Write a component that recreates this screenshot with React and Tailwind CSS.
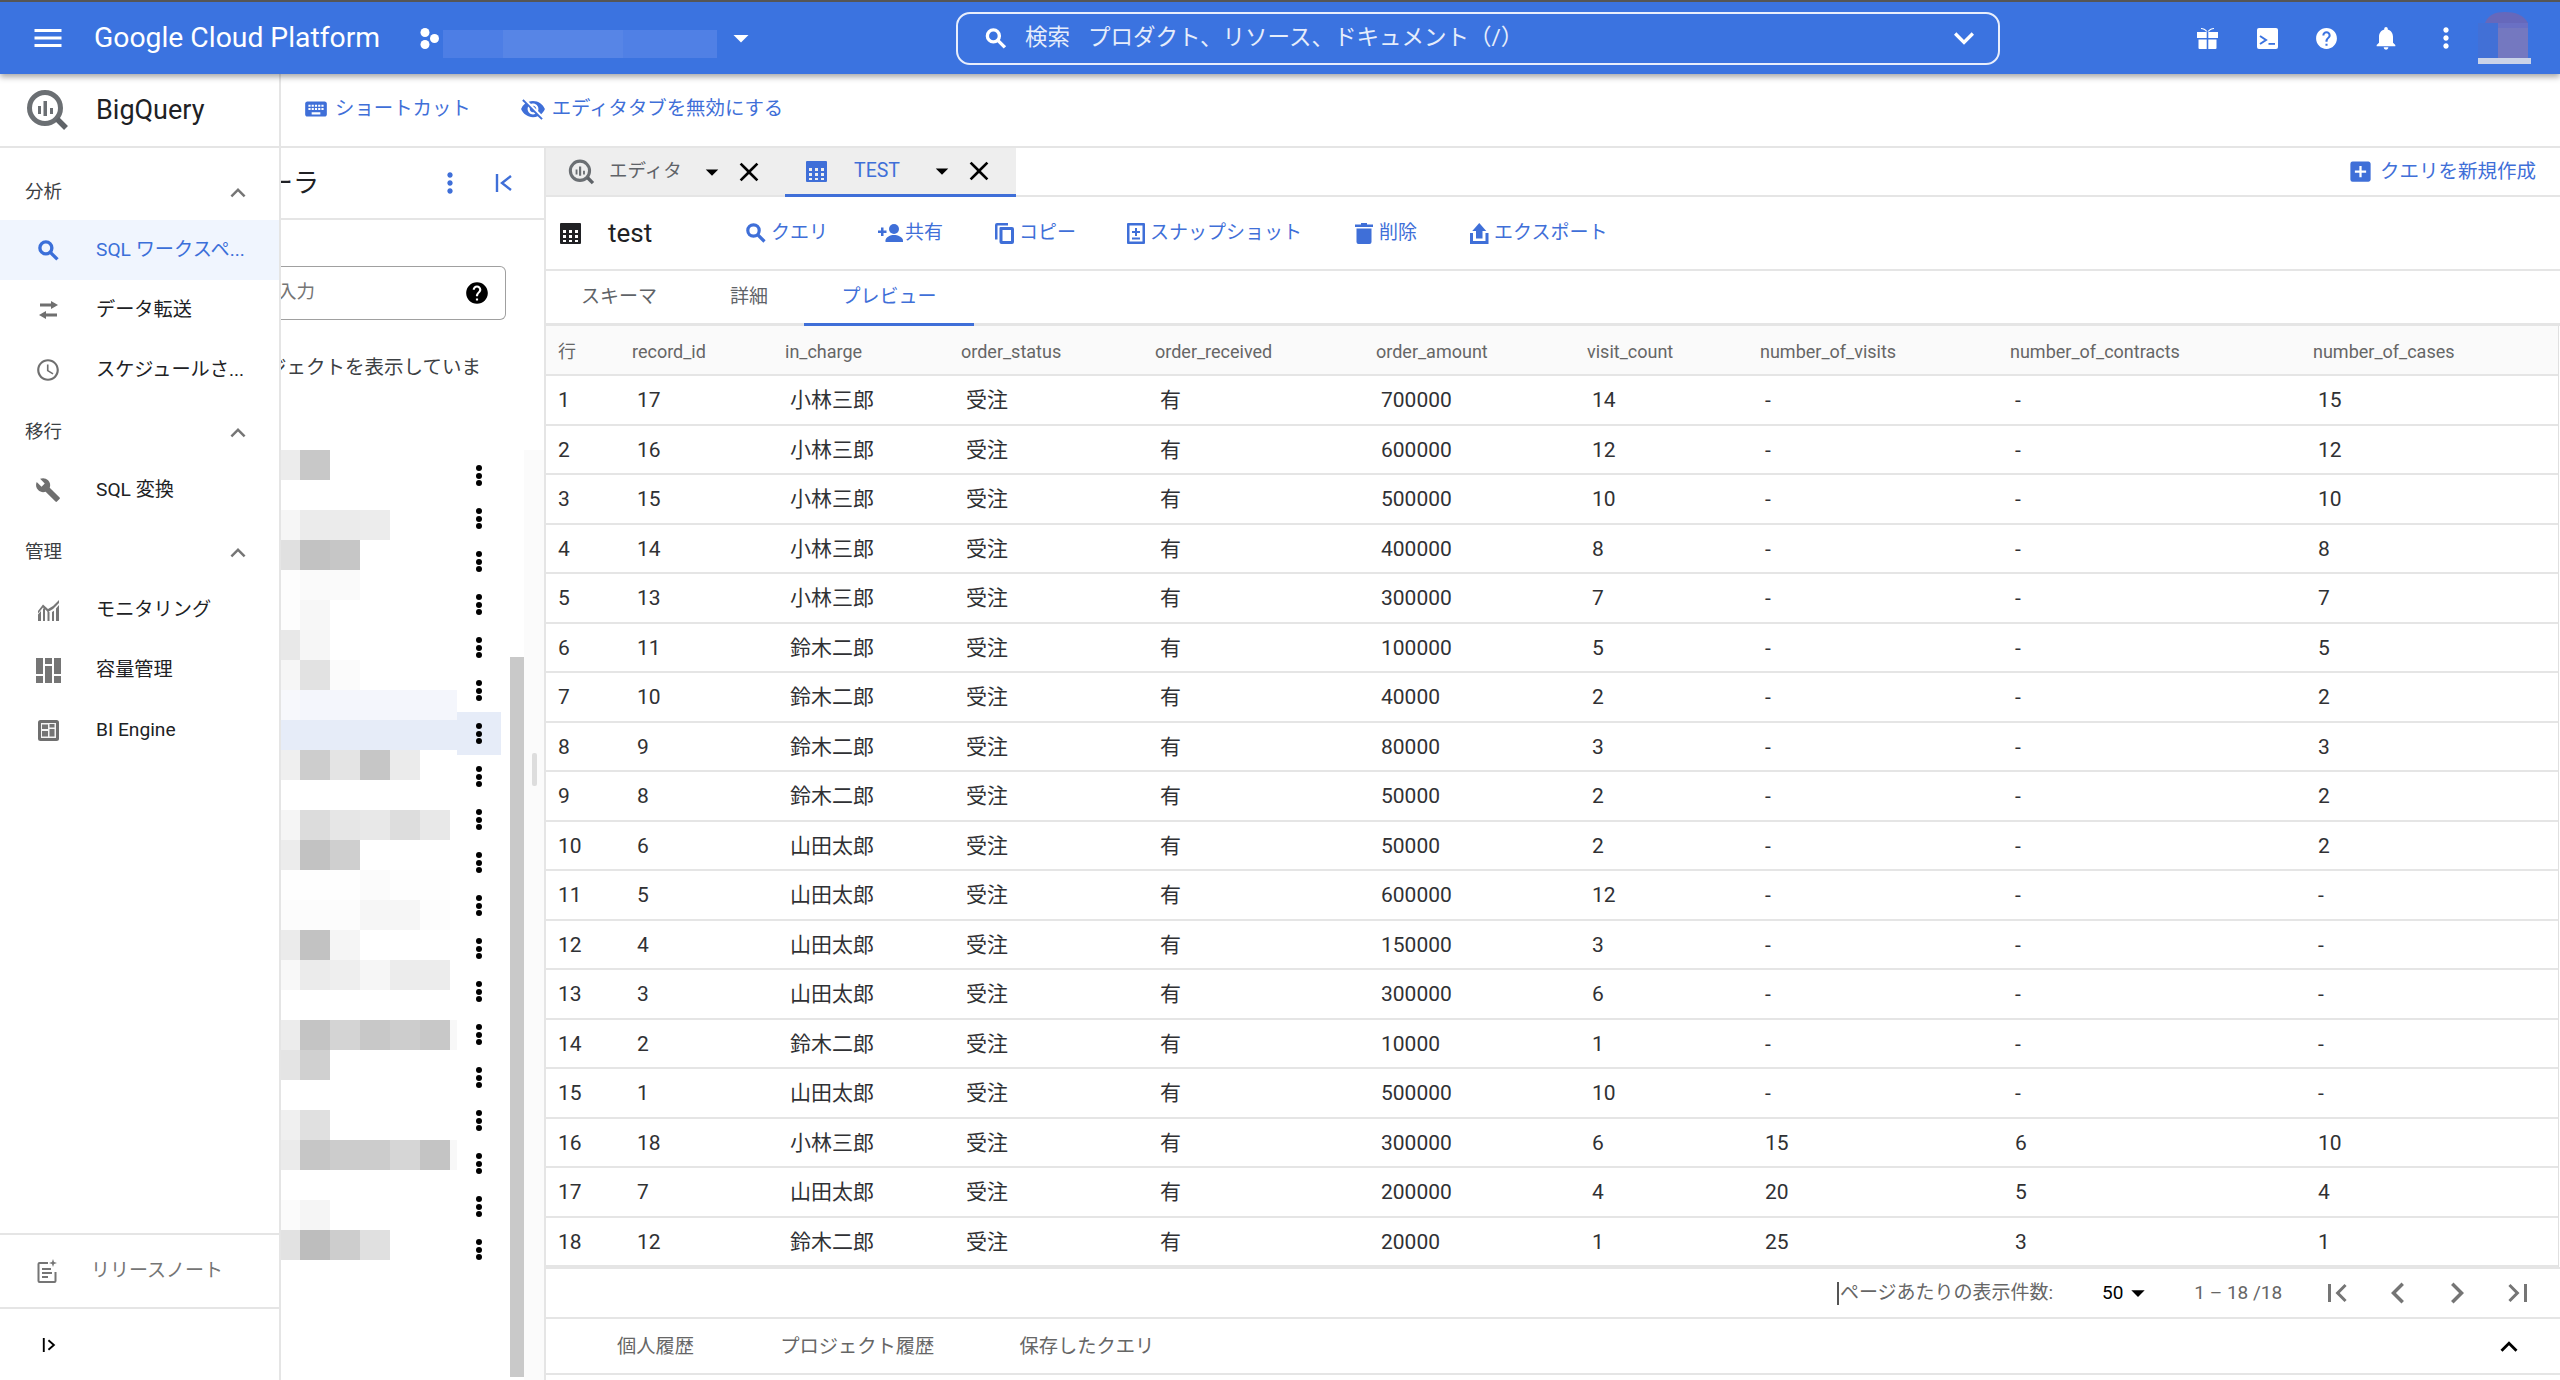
import React from "react";
import {
  MdMenu, MdArrowDropDown, MdKeyboardArrowDown, MdKeyboardArrowUp, MdHelp, MdNotifications, MdMoreVert,
  MdAccessTime, MdBuild, MdKeyboard, MdVisibilityOff, MdClose, MdAddBox,
  MdChevronLeft, MdChevronRight, MdFirstPage, MdLastPage,
} from "react-icons/md";

const Table = ({ className }) => (
  <svg viewBox="0 0 21 21" className={className} fill="currentColor">
    <path fillRule="evenodd" d="M1 0h19a1 1 0 0 1 1 1v19a1 1 0 0 1-1 1H1a1 1 0 0 1-1-1V1a1 1 0 0 1 1-1zM3 7v3h3V7zm6 0v3h3V7zm6 0v3h3V7zM3 12v3h3v-3zm6 0v3h3v-3zm6 0v3h3v-3zM3 17v2h3v-2zm6 0v2h3v-2zm6 0v2h3v-2z" />
  </svg>
);

const BqLogo = ({ className }) => (
  <svg viewBox="0 0 43 42" className={className}>
    <circle cx="19" cy="19" r="15.5" fill="none" stroke="#6b6f73" strokeWidth="5" />
    <path d="M31 30l9 9" stroke="#5f6368" strokeWidth="5.5" />
    <path d="M12 17h3v8h-3zM17.5 12h3.5v15h-3.5zM24 19h3v6h-3z" fill="#6b6f73" />
  </svg>
);

const Search = ({ className }) => (
  <svg viewBox="0 0 20 20" className={className} fill="none" stroke="currentColor">
    <circle cx="7.500" cy="7.500" r="5.700" strokeWidth="3.200" />
    <path d="M11.500 11.500L18.500 18.500" strokeWidth="3.200" />
  </svg>
);

const Swap = () => (
  <svg viewBox="0 0 21 18" className="w-[21px] h-[18px]" fill="#6f6f6f">
    <path d="M2 2.500h11V0l7 4-7 4V5.500H2zM19 12.500H8V10l-7 4 7 4v-2.500h11z" />
  </svg>
);

const Collapse = ({ className, flip }) => (
  <svg viewBox="0 0 20 18" className={className} fill="none" stroke="currentColor" strokeWidth="2.4">
    {flip ? <path d="M2 0v18M8 3l7 6-7 6" /> : <path d="M3 0v18M17 2l-9 7 9 7" />}
  </svg>
);

const Gift = () => (
  <svg viewBox="0 0 21 21" className="w-[21px] h-[21px]" fill="white">
    <path d="M4 0c2 0 5 1 6.500 3.500C12 1 15 0 17 0v1c-2 0-4 1-5 2.500H9C8 2 6 1 4 1z" />
    <path d="M0 4h9.700v6H0zM11.300 4H21v6h-9.700zM1.500 11.500h8.200V21H2.500a1 1 0 0 1-1-1zM11.300 11.500h8.200V20a1 1 0 0 1-1 1h-7.200z" />
  </svg>
);

const Terminal = () => (
  <svg viewBox="0 0 21 21" className="w-[21px] h-[21px]">
    <rect width="21" height="21" rx="2" fill="white" />
    <path d="M3 8l6 4-6 4" fill="none" stroke="#3b73e0" strokeWidth="2" />
    <path d="M11.500 15h6.500v1.800h-6.500z" fill="#3b73e0" />
  </svg>
);

const Monitoring = () => (
  <svg viewBox="0 0 21 21" className="w-[21px] h-[21px]" fill="#777777">
    <path d="M0 14.500l3-3.500v10H0zM5 9l2-2.200V21H5zM9.500 10.800l2 1.500V21h-2zM14 12l2-1.200V21h-2zM18 8.500l3-3.500v16h-3z" />
    <path d="M0 11L5 4.500l5 4.500 5-3 6-6v3l-6 6-5 3-5-4.500-5 6z" />
  </svg>
);

const Capacity = () => (
  <svg viewBox="0 0 25 25" className="w-[25px] h-[25px]" fill="#757575">
    <path d="M0 0h7v16H0zM9 0h7v6H9zM18 0h7v16h-7zM9 8h7v17H9zM0 18h7v7H0zM18 18h7v7h-7z" />
  </svg>
);

const BiEngine = () => (
  <svg viewBox="0 0 21 21" className="w-[21px] h-[21px]">
    <rect width="21" height="21" rx="2.500" fill="#6f6f6f" />
    <rect x="3" y="3" width="15" height="15" fill="#f4f4f4" />
    <path d="M4 4.500h6v4.500H4zM11.500 4h5v3.500h-5zM4 11h6v5.500H4zM11.500 9h5v7.500h-5z" fill="#757575" />
  </svg>
);

const Notes = () => (
  <svg viewBox="0 0 21 24" className="w-[21px] h-[24px]" fill="none" stroke="#757575">
    <path d="M11 4H2.500a1 1 0 0 0-1 1v17a1 1 0 0 0 1 1h15a1 1 0 0 0 1-1v-9" strokeWidth="2" />
    <path d="M5 10h9M5 14h10M5 18h6" strokeWidth="2.200" />
    <path d="M16 0l1 3 3 1-3 1-1 3-1-3-3-1 3-1z" fill="#757575" stroke="none" />
  </svg>
);

const PersonAdd = ({ className }) => (
  <svg viewBox="0 0 25 18" className={className} fill="currentColor">
    <path d="M0 6.500h3v-3h2.500v3h3V9h-3v3H3V9H0z" />
    <circle cx="16" cy="5" r="5" />
    <path d="M7.500 18v-1.500c0-3.500 5-5.500 8.500-5.500s9 2 9 5.500V18z" />
  </svg>
);

const Copy = ({ className }) => (
  <svg viewBox="0 0 19 21" className={className} fill="currentColor">
    <path fillRule="evenodd" d="M0 2a2 2 0 0 1 2-2h11v2.500H2.500v14H0zM5.500 4H17a2 2 0 0 1 2 2v13a2 2 0 0 1-2 2H6.500a2 2 0 0 1-2-2V5a1 1 0 0 1 1-1zM7.500 7v11h8.500V7z" />
  </svg>
);

const Snapshot = ({ className }) => (
  <svg viewBox="0 0 18 21" className={className} fill="currentColor">
    <path fillRule="evenodd" d="M1 0h16a1 1 0 0 1 1 1v19a1 1 0 0 1-1 1H1a1 1 0 0 1-1-1V1a1 1 0 0 1 1-1zM2.500 2.500v16h13v-16zM8 5h2v3h3v2h-3v3H8v-3H5V8h3zM5 14.500h8v2H5z" />
  </svg>
);

const Trash = ({ className }) => (
  <svg viewBox="0 0 18 21" className={className} fill="currentColor">
    <path d="M6 0h6v1.500h6V4H0V1.500h6zM1.500 5.500h15V19a2 2 0 0 1-2 2h-11a2 2 0 0 1-2-2z" />
  </svg>
);

const Export = ({ className }) => (
  <svg viewBox="0 0 18.500 21" className={className} fill="currentColor">
    <path d="M9.250 0l7 8H12.500v7.500h-6.500V8H2.250zM0 10h3v8h12.500v-8h3v11H0z" />
  </svg>
);

const Row3Dots = () => (
  <div className="flex flex-col gap-[1.700px] items-center">
    <span className="w-[6px] h-[6px] rounded-full bg-black" />
    <span className="w-[6px] h-[6px] rounded-full bg-black" />
    <span className="w-[6px] h-[6px] rounded-full bg-black" />
  </div>
);

const NavSection = ({ label }) => (
  <div className="h-[60px] pt-[6px] flex items-center justify-between pl-[25px] pr-[26px] text-[18.500px] text-[#3c4043]">
    <span>{label}</span>
    <MdKeyboardArrowUp className="text-[#757575]" size={30} />
  </div>
);

const NavRow = ({ icon, label, active }) => (
  <div className={active ? "h-[60px] flex items-center bg-[#f0f5fe] text-[#3b6fd9]" : "h-[60px] flex items-center text-[#202124]"}>
    <div className="ml-[30px] w-[36px] flex justify-center shrink-0">{icon}</div>
    <span className="ml-[30px] text-[19.200px] whitespace-nowrap">{label}</span>
  </div>
);

const w = ["w-[19px]", "w-[30px]", "w-[30px]", "w-[30px]", "w-[30px]", "w-[30px]", "w-[7px]"];
const mosaic = [
  ["bg-[#ececec]", "bg-[#c8c8c8]"],
  [],
  ["bg-[#f6f6f6]", "bg-[#ebebeb]", "bg-[#ebebeb]", "bg-[#ececec]"],
  ["bg-[#e0e0e0]", "bg-[#c2c2c2]", "bg-[#c6c6c6]"],
  ["bg-[#fdfdfd]", "bg-[#fafafa]", "bg-[#fafafa]"],
  ["bg-[#fdfdfd]", "bg-[#f7f7f7]"],
  ["bg-[#e8e8e8]", "bg-[#f6f6f6]"],
  ["bg-[#f6f6f6]", "bg-[#e2e2e2]", "bg-[#fbfbfb]"],
  ["bg-[#f7f8fc]", "bg-[#f4f6fc]", "bg-[#f4f6fc]", "bg-[#f4f6fc]", "bg-[#f4f6fc]", "bg-[#f4f6fc]", "bg-[#f4f6fc]"],
  ["bg-[#e6ecf8]", "bg-[#e6ecf8]", "bg-[#e6ecf8]", "bg-[#e6ecf8]", "bg-[#e6ecf8]", "bg-[#e6ecf8]", "bg-[#e6ecf8]"],
  ["bg-[#efefef]", "bg-[#cdcdcd]", "bg-[#e4e4e4]", "bg-[#c6c6c6]", "bg-[#ebebeb]"],
  [],
  ["bg-[#f5f5f5]", "bg-[#dcdcdc]", "bg-[#e6e6e6]", "bg-[#e8e8e8]", "bg-[#dddddd]", "bg-[#e8e8e8]"],
  ["bg-[#ececec]", "bg-[#c2c2c2]", "bg-[#cfcfcf]"],
  ["bg-[#fefefe]", "bg-[#fefefe]", "bg-[#fefefe]", "bg-[#fbfbfb]", "bg-[#fefefe]", "bg-[#fefefe]"],
  ["bg-[#fcfcfc]", "bg-[#fcfcfc]", "bg-[#fcfcfc]", "bg-[#f6f6f6]", "bg-[#f6f6f6]", "bg-[#fdfdfd]"],
  ["bg-[#ebebeb]", "bg-[#c2c2c2]", "bg-[#f5f5f5]"],
  ["bg-[#f8f8f8]", "bg-[#ebebeb]", "bg-[#eeeeee]", "bg-[#f6f6f6]", "bg-[#ececec]", "bg-[#ececec]"],
  [],
  ["bg-[#ececec]", "bg-[#c4c4c4]", "bg-[#d4d4d4]", "bg-[#c8c8c8]", "bg-[#cdcdcd]", "bg-[#c8c8c8]", "bg-[#f8f8f8]"],
  ["bg-[#e4e4e4]", "bg-[#d0d0d0]"],
  [],
  ["bg-[#f0f0f0]", "bg-[#e0e0e0]"],
  ["bg-[#ebebeb]", "bg-[#c6c6c6]", "bg-[#cccccc]", "bg-[#cccccc]", "bg-[#d6d6d6]", "bg-[#c4c4c4]", "bg-[#f8f8f8]"],
  [],
  ["bg-[#fbfbfb]", "bg-[#f5f5f5]"],
  ["bg-[#e2e2e2]", "bg-[#bdbdbd]", "bg-[#cdcdcd]", "bg-[#e0e0e0]"],
];

const columns = ["行", "record_id", "in_charge", "order_status", "order_received", "order_amount", "visit_count", "number_of_visits", "number_of_contracts", "number_of_cases"];
const K = "小林三郎", S = "鈴木二郎", Y = "山田太郎";
const rows = [
  [1, 17, K, 700000, 14, "-", "-", 15],
  [2, 16, K, 600000, 12, "-", "-", 12],
  [3, 15, K, 500000, 10, "-", "-", 10],
  [4, 14, K, 400000, 8, "-", "-", 8],
  [5, 13, K, 300000, 7, "-", "-", 7],
  [6, 11, S, 100000, 5, "-", "-", 5],
  [7, 10, S, 40000, 2, "-", "-", 2],
  [8, 9, S, 80000, 3, "-", "-", 3],
  [9, 8, S, 50000, 2, "-", "-", 2],
  [10, 6, Y, 50000, 2, "-", "-", 2],
  [11, 5, Y, 600000, 12, "-", "-", "-"],
  [12, 4, Y, 150000, 3, "-", "-", "-"],
  [13, 3, Y, 300000, 6, "-", "-", "-"],
  [14, 2, S, 10000, 1, "-", "-", "-"],
  [15, 1, Y, 500000, 10, "-", "-", "-"],
  [16, 18, K, 300000, 6, 15, 6, 10],
  [17, 7, Y, 200000, 4, 20, 5, 4],
  [18, 12, S, 20000, 1, 25, 3, 1],
];
const grid = "grid grid-cols-[81px_153px_176px_194px_221px_211px_173px_250px_303px_250px] items-center";

const Action = ({ icon, label, className }) => (
  <div className={"flex items-center text-[19px] text-[#3f6fd8] " + className}>
    {icon}
    <span className="whitespace-nowrap">{label}</span>
  </div>
);

export default function App() {
  return (
    <div className="w-[2560px] h-[1380px] overflow-hidden bg-white flex flex-col font-[Roboto,'Noto_Sans_CJK_JP',sans-serif]">
      {/* Top bar */}
      <header className="relative z-10 h-[74px] shrink-0 border-t-2 border-[#555555] bg-[#3b73e0] flex items-center text-white shadow-[0_3px_6px_rgba(0,0,0,0.35)]">
        <MdMenu size={36} className="ml-[30px] shrink-0" />
        <span className="ml-[28px] w-[326px] text-[28.300px] whitespace-nowrap">Google Cloud Platform</span>
        <svg viewBox="0 0 19 21" className="w-[19px] h-[21px] shrink-0" fill="white">
          <circle cx="5" cy="4.500" r="4.500" /><circle cx="5" cy="16.500" r="4.500" /><circle cx="14.500" cy="10.500" r="4.500" />
        </svg>
        <div className="ml-[4px] w-[274px] h-[28px] mt-[12px] flex shrink-0 bg-[#4f7fe4]">
          <div className="w-[60px] bg-[#4d7ee5]" />
          <div className="w-[120px] bg-[#5785e6]" />
          <div className="w-[94px] bg-[#5080e5]" />
        </div>
        <MdArrowDropDown size={36} className="ml-[6px] shrink-0" />
        <div className="ml-[197px] w-[1044px] h-[53px] shrink-0 rounded-[14px] border-2 border-[#e8eefc] flex items-center">
          <Search className="ml-[27px] w-[22px] h-[21px] shrink-0" />
          <span className="ml-[18px] text-[22.500px] whitespace-nowrap text-[#e6edfb]">検索</span>
          <span className="ml-[18px] text-[22.500px] whitespace-nowrap text-[#e6edfb]">プロダクト、リソース、ドキュメント（/）</span>
          <MdKeyboardArrowDown size={40} className="ml-auto mr-[14px] shrink-0" />
        </div>
        <div className="ml-[189px] w-[36px] flex justify-center"><Gift /></div>
        <div className="ml-[24px] w-[36px] flex justify-center"><Terminal /></div>
        <MdHelp size={25} className="ml-[29px] shrink-0" />
        <MdNotifications size={28} className="ml-[33px] shrink-0" />
        <MdMoreVert size={32} className="ml-[30px] shrink-0" />
        <svg viewBox="0 0 53 52" className="ml-[16px] w-[53px] h-[52px] shrink-0">
          <path d="M7 11C10 3 17 0 27 0s19 3 23 11v0z" fill="#6668bb" />
          <rect x="0" y="11" width="20" height="35" fill="#4270d6" />
          <rect x="20" y="11" width="30" height="5" fill="#6a70c4" />
          <rect x="20" y="16" width="30" height="30" fill="#7478c0" />
          <rect x="0" y="46" width="53" height="6" fill="#cad3e8" />
        </svg>
      </header>

      <div className="flex-1 flex min-h-0">
        {/* Left nav */}
        <nav className="w-[281px] shrink-0 border-r-2 border-[#e5e5e5] flex flex-col">
          <div className="h-[74px] shrink-0 border-b-2 border-[#e5e5e5] flex items-center">
            <BqLogo className="ml-[26px] w-[43px] h-[42px] shrink-0" />
            <span className="ml-[27px] text-[27px] text-[#202124]">BigQuery</span>
          </div>
          <div className="h-[72px] pt-[18px] flex items-center justify-between pl-[25px] pr-[26px] text-[18.500px] text-[#3c4043]">
            <span>分析</span>
            <MdKeyboardArrowUp className="text-[#757575]" size={30} />
          </div>
          <NavRow active label="SQL ワークスペ..." icon={<Search className="w-[21px] h-[21px] text-[#3b6fd9]" />} />
          <NavRow label="データ転送" icon={<Swap />} />
          <NavRow label="スケジュールさ..." icon={<MdAccessTime size={26} className="text-[#6f6f6f]" />} />
          <NavSection label="移行" />
          <NavRow label="SQL 変換" icon={<MdBuild size={26} className="text-[#6f6f6f]" />} />
          <NavSection label="管理" />
          <NavRow label="モニタリング" icon={<Monitoring />} />
          <NavRow label="容量管理" icon={<Capacity />} />
          <NavRow label="BI Engine" icon={<BiEngine />} />
          <div className="mt-auto h-[74px] border-t-2 border-[#e5e5e5] flex items-center">
            <div className="ml-[37px]"><Notes /></div>
            <span className="ml-[33px] text-[19px] text-[#757575]">リリースノート</span>
          </div>
          <div className="h-[73px] border-t-2 border-[#e5e5e5] flex items-center">
            <Collapse flip className="ml-[42px] w-[16px] h-[14px] text-black" />
          </div>
        </nav>

        <div className="flex-1 flex flex-col min-w-0">
          {/* Utility bar */}
          <div className="h-[74px] shrink-0 border-b-2 border-[#e5e5e5] flex items-center pb-[2px] text-[19px] text-[#3f6fd8]">
            <MdKeyboard size={26} className="ml-[22px] shrink-0" />
            <span className="ml-[6px] text-[19.400px] whitespace-nowrap">ショートカット</span>
            <MdVisibilityOff size={26} className="ml-[49px] shrink-0" />
            <span className="ml-[6px] text-[19.400px] whitespace-nowrap">エディタタブを無効にする</span>
          </div>

          <div className="flex-1 flex min-h-0">
            {/* Explorer */}
            <aside className="w-[263px] shrink-0 flex flex-col">
              <div className="h-[72px] shrink-0 border-b-2 border-[#e5e5e5] flex items-center justify-end overflow-hidden">
                <span className="mr-auto -ml-[14px] text-[26px] text-[#202124] whitespace-nowrap">ーラ</span>
                <MdMoreVert size={32} className="text-[#3f6fd8] mr-[28px]" />
                <Collapse className="w-[20px] h-[18px] text-[#3f6fd8] mr-[30px]" />
              </div>
              <div className="flex-1 flex min-h-0">
                <div className="w-[229px] shrink-0 flex flex-col">
                  <div className="mt-[46px] h-[54px] w-[225px] rounded-r-[6px] border border-l-0 border-[#a0a0a0] flex items-center justify-between overflow-hidden text-[18.500px] text-[#757575]">
                    <span className="-ml-[3px]">入力</span>
                    <MdHelp size={26} className="text-black mr-[15px]" />
                  </div>
                  <div className="mt-[35px] h-[26px] flex items-center justify-end pr-[29px] text-[19.500px] text-[#3c4043] whitespace-nowrap overflow-hidden">
                    ジェクトを表示していま
                  </div>
                  <div className="mt-[69px] flex">
                    <div className="w-[176px] shrink-0 flex flex-col">
                      {mosaic.map((band, i) => (
                        <div key={i} className="h-[30px] flex">
                          {band.map((c, j) => <div key={j} className={w[j] + " " + c} />)}
                        </div>
                      ))}
                    </div>
                    <div className="w-[44px] shrink-0 pt-[4px] flex flex-col">
                      {Array.from({ length: 19 }).map((_, i) => (
                        <div key={i} className={i === 6 ? "h-[43px] flex items-center justify-center bg-[#e6ecf8]" : "h-[43px] flex items-center justify-center"}>
                          <Row3Dots />
                        </div>
                      ))}
                    </div>
                  </div>
                </div>
                <div className="w-[14px] shrink-0 pt-[437px] pb-[3px] flex">
                  <div className="w-full bg-[#c9c9c9]" />
                </div>
                <div className="w-[20px] shrink-0 mt-[230px] bg-[#fbfbfb] flex justify-center pt-[303px]">
                  <div className="w-[5px] h-[33px] rounded-[2px] bg-[#dddddd]" />
                </div>
              </div>
            </aside>

            {/* Main */}
            <main className="flex-1 min-w-0 border-l-2 border-[#e5e5e5] flex flex-col">
              <div className="h-[49px] shrink-0 border-b-2 border-[#e5e5e5] flex items-stretch">
                <div className="w-[239px] bg-[#eeeeee] flex items-center text-[18.500px] text-[#5f6368]">
                  <BqLogo className="ml-[22px] w-[27px] h-[26px] shrink-0" />
                  <span className="ml-[14px]">エディタ</span>
                  <MdArrowDropDown size={30} className="ml-[15px] text-black shrink-0" />
                  <MdClose size={32} className="ml-[6px] text-black shrink-0" />
                </div>
                <div className="w-[231px] bg-[#eeeeee] border-b-[3px] border-[#3f6fd8] -mb-[2px] flex items-center text-[19.500px] text-[#3f6fd8]">
                  <Table className="ml-[21px] w-[21px] h-[21px] shrink-0" />
                  <span className="ml-[27px]">TEST</span>
                  <MdArrowDropDown size={30} className="ml-[27px] text-black shrink-0" />
                  <MdClose size={32} className="ml-[6px] text-black shrink-0" />
                </div>
                <div className="ml-auto flex items-center text-[19.500px] text-[#3f6fd8] pr-[24px]">
                  <MdAddBox size={27} className="shrink-0" />
                  <span className="ml-[6px] whitespace-nowrap">クエリを新規作成</span>
                </div>
              </div>

              <div className="h-[74px] shrink-0 border-b-2 border-[#e5e5e5] flex items-center">
                <Table className="ml-[14px] w-[21px] h-[21px] text-[#202124] shrink-0" />
                <span className="ml-[27px] w-[138px] text-[26px] text-[#202124]">test</span>
                <Action className="" label="クエリ" icon={<Search className="w-[20px] h-[20px] mr-[5px] shrink-0" />} />
                <Action className="ml-[50px]" label="共有" icon={<PersonAdd className="w-[25px] h-[18px] mr-[2px] shrink-0" />} />
                <Action className="ml-[52px]" label="コピー" icon={<Copy className="w-[19px] h-[21px] mr-[5px] shrink-0" />} />
                <Action className="ml-[51px]" label="スナップショット" icon={<Snapshot className="w-[18px] h-[21px] mr-[5px] shrink-0" />} />
                <Action className="ml-[53px]" label="削除" icon={<Trash className="w-[18px] h-[21px] mr-[6px] shrink-0" />} />
                <Action className="ml-[53px]" label="エクスポート" icon={<Export className="w-[18.500px] h-[21px] mr-[5.500px] shrink-0" />} />
              </div>

              <div className="h-[55px] shrink-0 border-b-[3px] border-[#e5e5e5] flex items-stretch text-[19px] text-[#5f6368]">
                <div className="ml-[35px] flex items-center">スキーマ</div>
                <div className="ml-[73px] flex items-center">詳細</div>
                <div className="ml-[36px] w-[170px] -mb-[3px] border-b-[3px] border-[#3f6fd8] flex items-center justify-center text-[#3f6fd8]">プレビュー</div>
              </div>

              <div className="border-r border-[#e0e0e0] mr-px">
                <div className={grid + " h-[50px] pt-[2px] bg-[#fafafa] border-b-2 border-[#e5e5e5] text-[18px] text-[#666666]"}>
                  {columns.map((c, i) => (
                    <div key={c} className={i === 0 ? "pl-[12px]" : "pl-[5px]"}>{c}</div>
                  ))}
                </div>
                {rows.map((r) => (
                  <div key={r[0]} className={grid + " h-[49.500px] pt-[2px] border-b-2 border-[#e5e5e5] text-[21px] text-[#303134]"}>
                    <div className="pl-[12px]">{r[0]}</div>
                    <div className="pl-[10px]">{r[1]}</div>
                    <div className="pl-[10px]">{r[2]}</div>
                    <div className="pl-[10px]">受注</div>
                    <div className="pl-[10px]">有</div>
                    <div className="pl-[10px]">{r[3]}</div>
                    <div className="pl-[10px]">{r[4]}</div>
                    <div className="pl-[10px]">{r[5]}</div>
                    <div className="pl-[10px]">{r[6]}</div>
                    <div className="pl-[10px]">{r[7]}</div>
                  </div>
                ))}
              </div>

              <div className="h-[52px] shrink-0 border-t-2 border-b-2 border-[#e5e5e5] flex items-center text-[19px] text-[#666666]">
                <span className="ml-[1291px] w-[2px] h-[23px] bg-[#555555]" />
                <span className="ml-[1px] w-[216px] whitespace-nowrap">ページあたりの表示件数:</span>
                <span className="ml-[46px] text-black">50</span>
                <MdArrowDropDown size={32} className="text-black -ml-[1px]" />
                <span className="ml-[40px] w-[96px] whitespace-nowrap">1 – 18 /18</span>
                <MdFirstPage size={36} className="ml-[29px] text-[#757575]" />
                <MdChevronLeft size={42} className="ml-[22px] text-[#757575]" />
                <MdChevronRight size={42} className="ml-[17px] text-[#757575]" />
                <MdLastPage size={36} className="ml-[22px] text-[#757575]" />
              </div>

              <div className="h-[56px] pt-[2px] shrink-0 border-b-2 border-[#e5e5e5] flex items-center text-[19.300px] text-[#666666]">
                <span className="ml-[71px]">個人履歴</span>
                <span className="ml-[86px]">プロジェクト履歴</span>
                <span className="ml-[85px]">保存したクエリ</span>
                <MdKeyboardArrowUp size={34} className="ml-[1338px] text-black" />
              </div>
            </main>
          </div>
        </div>
      </div>
    </div>
  );
}
